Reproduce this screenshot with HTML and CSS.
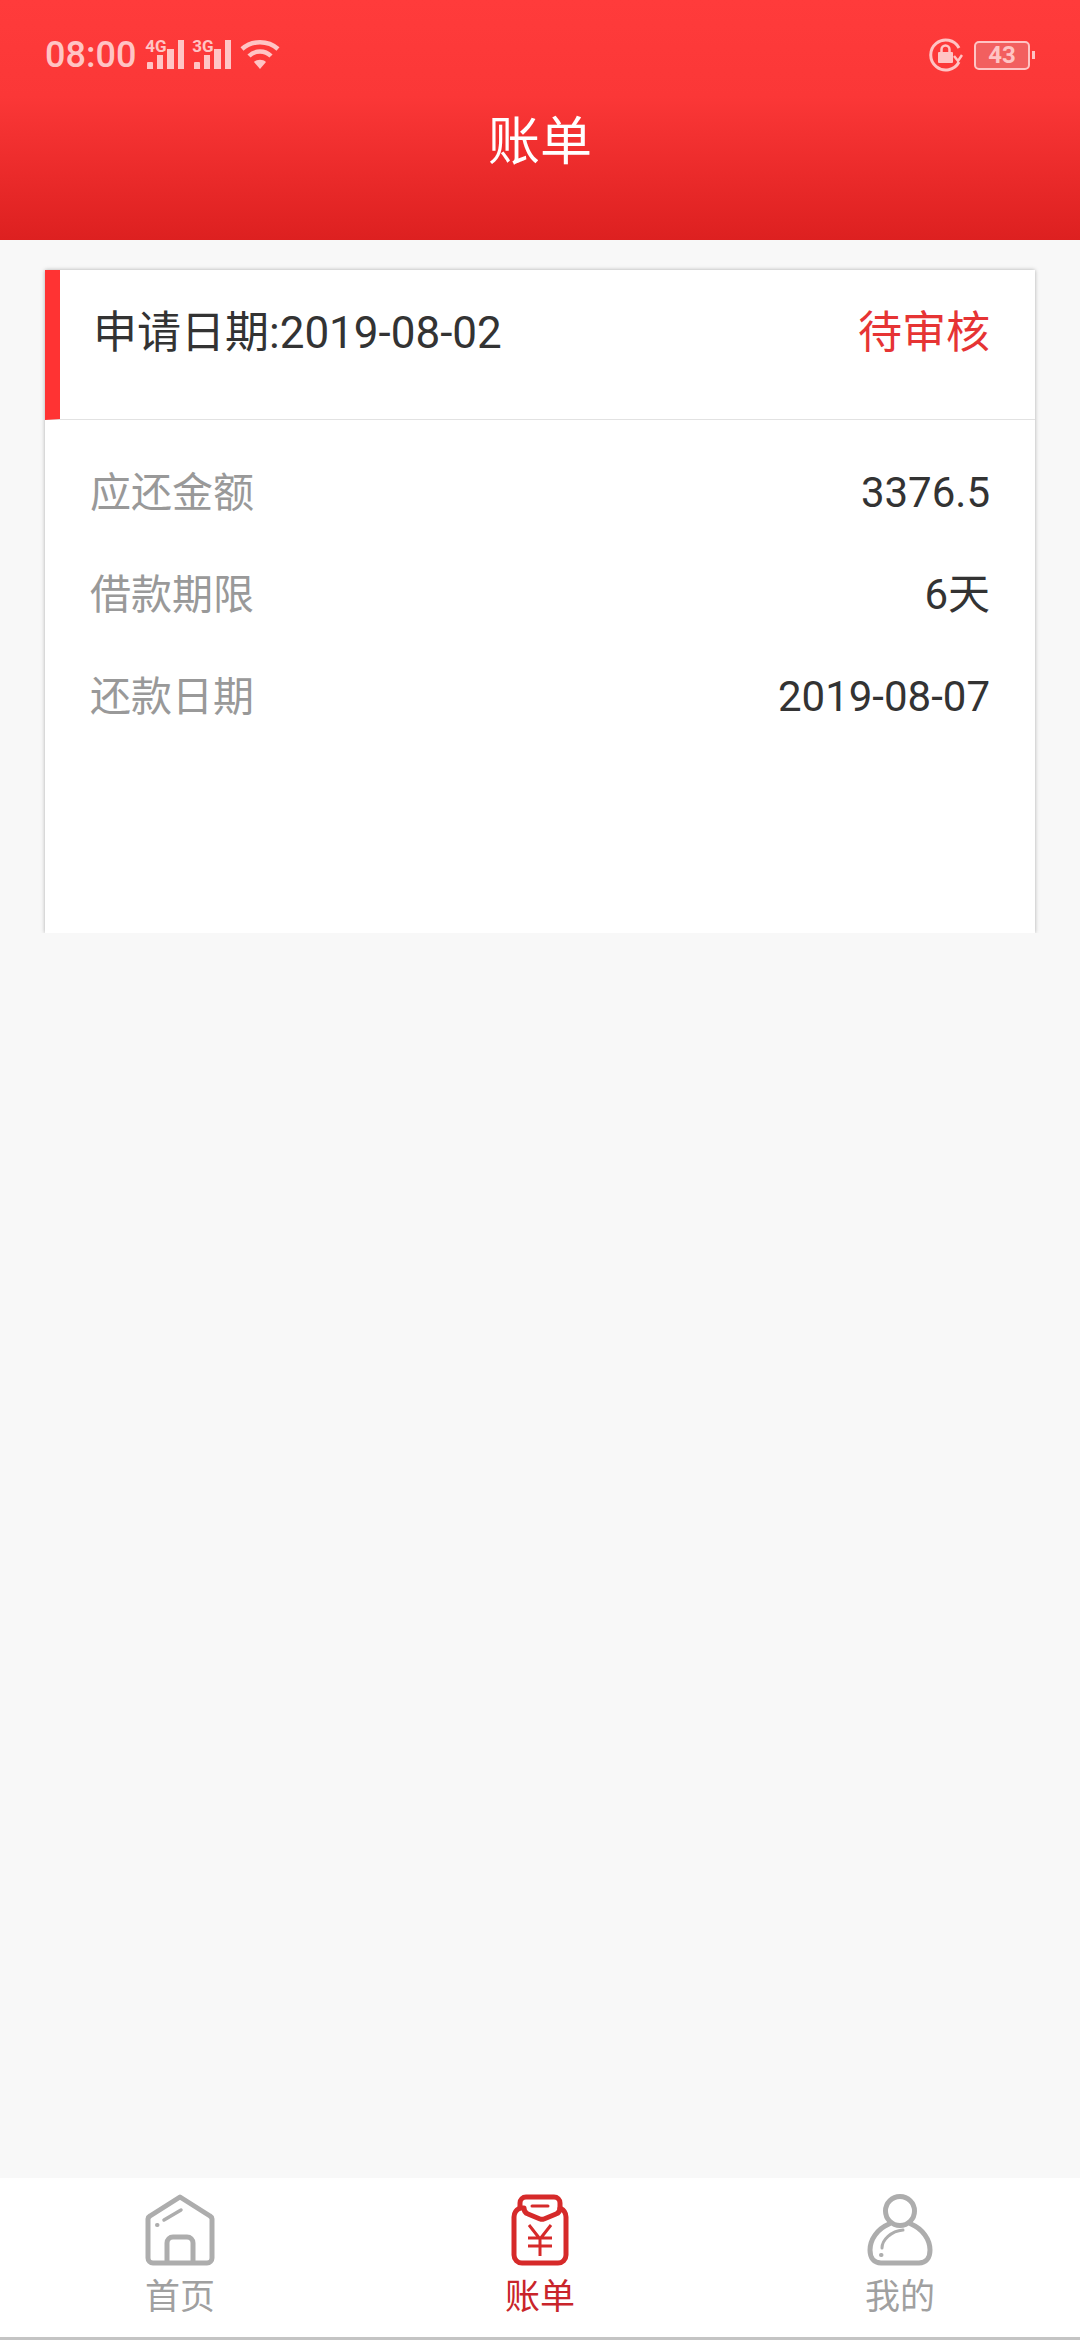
FILE: index.html
```html
<!DOCTYPE html>
<html lang="zh-CN">
<head>
  <meta charset="UTF-8" />
  <meta name="viewport" content="width=device-width, initial-scale=1.0"/>
  <title>账单</title>
  <link rel="stylesheet" href="styles.css">
</head>
<body>
  <header class="top">
    <div class="status">
      <div class="status-left">
        <span class="time">08:00</span>
        <span class="net">
          <span class="net-label">4G</span>
          <svg width="38" height="29" viewBox="0 0 38 29"><path d="M1 23a1 1 0 0 1 1-1h4a1 1 0 0 1 1 1v6H1zM11 15h6v14h-6zM21 9h7v20h-7zM32 0h6v29h-6z"/></svg>
        </span>
        <span class="net">
          <span class="net-label">3G</span>
          <svg width="38" height="29" viewBox="0 0 38 29"><path d="M1 23a1 1 0 0 1 1-1h4a1 1 0 0 1 1 1v6H1zM11 15h6v14h-6zM21 9h7v20h-7zM32 0h6v29h-6z"/></svg>
        </span>
        <svg class="wifi" width="40" height="29" viewBox="0 0 40 29" fill="none" stroke="#ffc4c4" stroke-width="4.500">
          <path d="M2 9C12 0 28 0 38 9"/>
          <path d="M9 16C15 10 25 10 31 16"/>
          <path d="M20 29l-6-7C17 19 23 19 26 22z" fill="#ffc4c4" stroke="none"/>
        </svg>
      </div>
      <div class="status-right">
        <svg width="34" height="34" viewBox="0 0 34 34" fill="none" stroke="#ffc4c4" stroke-width="3">
          <path d="M30 24A15 15 0 1 1 30 10"/>
          <path d="M33 17l-4 6-4-5" stroke-width="2.500"/>
          <rect x="9" y="14" width="15" height="11" rx="1" fill="#ffc4c4" stroke="none"/>
          <path d="M12.500 14v-2.500a4 4 0 0 1 8 0V14" stroke-width="2.500"/>
        </svg>
        <div class="battery"><span class="battery-num">43</span></div>
        <span class="battery-tip"></span>
      </div>
    </div>
    <h1 class="title">账单</h1>
  </header>

  <main class="content">
    <section class="bill">
      <div class="bill-head">
        <span class="bill-date">申请日期:2019-08-02</span>
        <span class="bill-state">待审核</span>
      </div>
      <div class="bill-body">
        <div class="row"><span class="row-label">应还金额</span><span class="row-value">3376.5</span></div>
        <div class="row"><span class="row-label">借款期限</span><span class="row-value">6天</span></div>
        <div class="row"><span class="row-label">还款日期</span><span class="row-value">2019-08-07</span></div>
      </div>
    </section>
  </main>

  <nav class="tabs">
    <div class="tab">
      <svg width="70" height="72" viewBox="0 0 70 72" fill="none" stroke="#adadad" stroke-width="5" stroke-linejoin="round" stroke-linecap="round">
        <path d="M35 3L5 22a4 4 0 0 0-2 3v39a5 5 0 0 0 5 5h54a5 5 0 0 0 5-5V25a4 4 0 0 0-2-3z"/>
        <path d="M22 68V49a6 6 0 0 1 6-6h14a6 6 0 0 1 6 6v19"/>
        <path d="M19 26L36 16" stroke-width="3.500"/>
        <path d="M12 31h.5" stroke-width="4"/>
      </svg>
      <span class="tab-label">首页</span>
    </div>
    <div class="tab tab-on">
      <svg width="58" height="72" viewBox="0 0 58 72" fill="none" stroke="#d62a2a" stroke-width="5" stroke-linejoin="round" stroke-linecap="round">
        <path d="M9 14C5 16 3 19 3 23v38a8 8 0 0 0 8 8h36a8 8 0 0 0 8-8V23c0-4-2-7-6-9"/>
        <path d="M9 14V9a6 6 0 0 1 6-6h28a6 6 0 0 1 6 6v5c0 3-1 5-4 6l-12 5a6 6 0 0 1-4 0l-12-5c-3-1-4-3-4-6z"/>
        <path d="M21 12h16" stroke-width="3"/>
        <path d="M18 31l11 14 11-14M17 44h24M17 52h24M29 45v17" stroke-width="3" stroke-linecap="butt" stroke-linejoin="miter"/>
      </svg>
      <span class="tab-label">账单</span>
    </div>
    <div class="tab">
      <svg width="66" height="72" viewBox="0 0 66 72" fill="none" stroke="#adadad" stroke-width="5" stroke-linecap="round">
        <circle cx="33" cy="17" r="14.500"/>
        <path d="M22 30C10 35 3 46 3 56c0 8 4 13 11 13h38c7 0 11-5 11-13 0-10-7-21-19-26"/>
        <path d="M15 54c0-8 9-17 21-18" stroke-width="3"/>
        <path d="M14 61h.5" stroke-width="4"/>
      </svg>
      <span class="tab-label">我的</span>
    </div>
  </nav>
</body>
</html>
```

FILE: styles.css
```css
* {
  box-sizing: border-box;
}

html, body {
  height: 100%;
}

body {
  margin: 0;
  display: flex;
  flex-direction: column;
  height: 2340px;
  background: #f8f8f8;
  font-family: Roboto, "Noto Sans CJK SC", sans-serif;
  overflow: hidden;
}

/* red top bar */
.top {
  height: 240px;
  flex: none;
  padding: 0 45px 0 45px;
  background: linear-gradient(180deg, #ff3b3b 0%, #fb3737 40%, #dd2020 100%);
}

.status {
  height: 110px;
  display: flex;
  justify-content: space-between;
  align-items: center;
}

.status-left {
  display: flex;
  align-items: center;
}

.time {
  font-size: 36px;
  line-height: 40px;
  font-weight: 500;
  color: #ffc4c4;
  margin-right: 10px;
}

.net {
  position: relative;
  width: 38px;
  height: 29px;
  margin-right: 9px;
  display: block;
  margin-top: -2px;
}

.net svg {
  display: block;
  fill: #ffc4c4;
}

.net-label {
  position: absolute;
  left: -1px;
  top: -1px;
  font-size: 17px;
  line-height: 14px;
  font-weight: 700;
  color: #ffc4c4;
}

.wifi {
  margin-left: 0;
  margin-top: -2px;
}

.status-right {
  display: flex;
  align-items: center;
}

.battery {
  width: 56px;
  height: 29px;
  margin-left: 11px;
  border: 2px solid #ffc4c4;
  border-radius: 5px;
  background: #f25f5f;
  display: flex;
  align-items: center;
  justify-content: center;
}

.battery-num {
  font-size: 24px;
  line-height: 24px;
  font-weight: 700;
  color: #ffc4c4;
}

.battery-tip {
  width: 3px;
  height: 8px;
  margin-left: 2px;
  background: #ffc4c4;
}

.title {
  margin: 0;
  font-size: 52px;
  line-height: 66px;
  font-weight: 400;
  text-align: center;
  color: #fff;
}

/* bill card */
.content {
  flex: 1;
  padding: 30px 45px 0;
}

.bill {
  height: 663px;
  background: #fff;
  box-shadow: 0 0 4px rgba(0, 0, 0, 0.3);
  clip-path: inset(-6px -6px 0 -6px);
}

.bill-head {
  height: 150px;
  padding: 36px 45px 0 33px;
  display: flex;
  justify-content: space-between;
  align-items: flex-start;
  border-left: 15px solid #ff3333;
  border-bottom: 1px solid #e2e2e2;
}

.bill-date {
  font-size: 44px;
  line-height: 54px;
  color: #333;
}

.bill-state {
  font-size: 44px;
  line-height: 54px;
  color: #e63434;
}

.bill-body {
  padding: 22px 45px 0;
}

.row {
  height: 102px;
  display: flex;
  justify-content: space-between;
  align-items: center;
}

.row-label {
  font-size: 41px;
  line-height: 54px;
  color: #999;
}

.row-value {
  font-size: 42px;
  line-height: 54px;
  color: #333;
}

/* bottom tabs */
.tabs {
  flex: none;
  height: 162px;
  display: grid;
  grid-template-columns: repeat(3, 1fr);
  padding-top: 16px;
  background: #fff;
  border-bottom: 3px solid #c4c4c4;
}

.tab {
  display: flex;
  flex-direction: column;
  align-items: center;
  color: #a0a0a0;
}

.tab svg {
  display: block;
}

.tab-label {
  margin-top: 10px;
  font-size: 35px;
  line-height: 44px;
}

.tab-on {
  color: #c9242a;
}
```
